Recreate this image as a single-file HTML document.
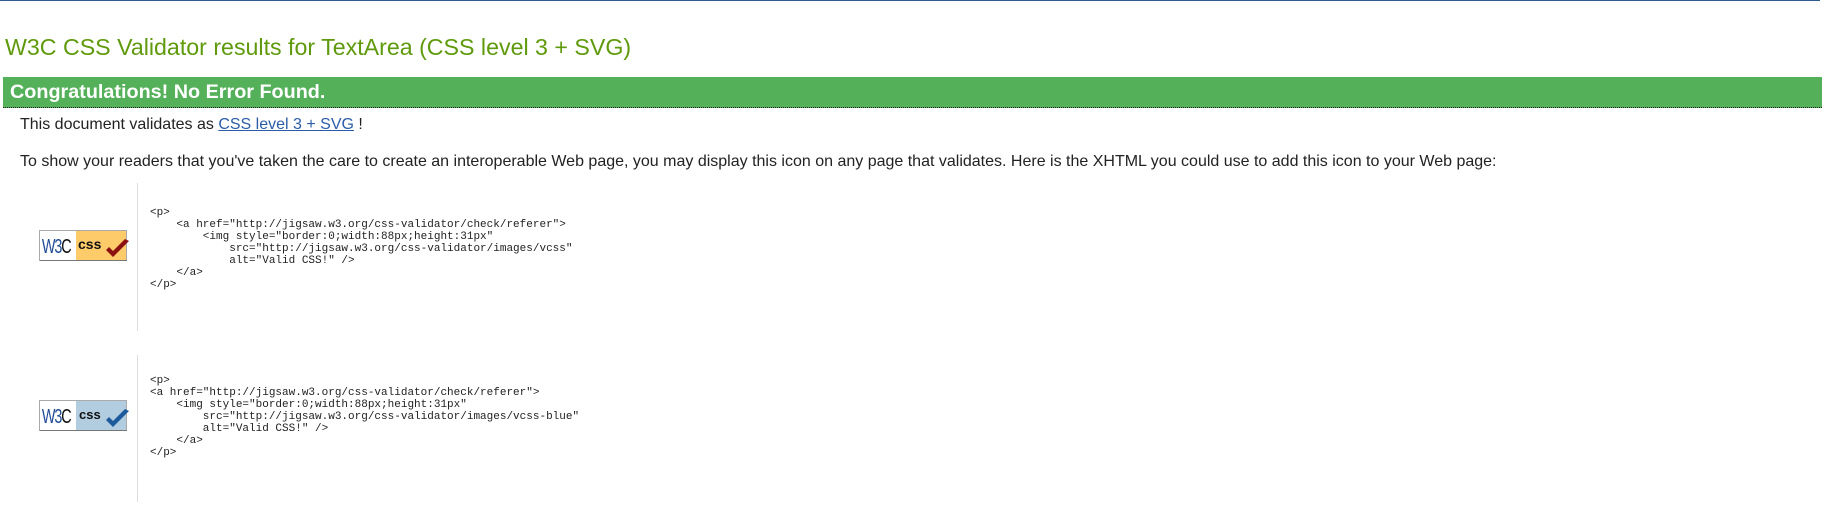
<!DOCTYPE html>
<html><head><meta charset="utf-8"><style>
body{margin:0;width:1826px;height:526px;background:#fff;position:relative;overflow:hidden;font-family:"Liberation Sans",Arial,sans-serif;}
.abs{position:absolute;}
.topline{left:0;top:0;width:1820px;height:1px;background:#2f5b8f;}
h2{position:absolute;left:5px;top:34px;margin:0;font-weight:normal;font-size:23.2px;color:#5f9a0c;white-space:nowrap;}
.bar{left:3px;top:77px;width:1819px;height:30px;background:#55b05a;border-bottom:1px dotted #222;}
.bar span{position:absolute;left:7px;top:4px;color:#fff;font-weight:bold;font-size:19.8px;}
.t{font-size:16px;color:#222;white-space:nowrap;}
a{color:#2a5ca8;}
.sep{width:1px;background:#ddd;left:137px;}
pre{position:absolute;margin:0;font-family:"Liberation Mono","DejaVu Sans Mono",monospace;font-size:11px;line-height:12px;color:#222;left:150px;}
</style></head><body>
<div class="abs topline"></div>
<h2>W3C CSS Validator results for TextArea (CSS level 3 + SVG)</h2>
<div class="abs bar"><span>Congratulations! No Error Found.</span></div>
<div class="abs t" style="left:20px;top:116px;">This document validates as <a href="#">CSS level 3 + SVG</a> !</div>
<div class="abs t" style="left:20px;top:153px;">To show your readers that you've taken the care to create an interoperable Web page, you may display this icon on any page that validates. Here is the XHTML you could use to add this icon to your Web page:</div>

<div class="abs sep" style="top:183px;height:148px;"></div>
<svg class="abs" style="left:39px;top:230px" width="92" height="34" viewBox="0 0 92 34">
<rect x="0.5" y="0.5" width="87" height="30" fill="#fff" stroke="#aaa"/>
<rect x="37" y="1" width="50" height="29" fill="#fdcb6a"/>
<line x1="1" y1="30.5" x2="88" y2="30.5" stroke="#777"/>
<g transform="scale(0.72,1)"><text x="4" y="23" font-family="Liberation Sans,sans-serif" font-size="20" fill="#1e4c95" letter-spacing="-1.5">W3<tspan fill="#111" letter-spacing="0">C</tspan></text></g>
<text x="39" y="19" font-family="Liberation Sans,sans-serif" font-weight="bold" font-size="14" fill="#111">css</text>
<path d="M67 20 L74 27 L90 11 L86 9 L74 21 L70 17 Z" fill="#8b1010"/>
</svg>
<pre style="top:207px;">&lt;p&gt;
    &lt;a href="http://jigsaw.w3.org/css-validator/check/referer"&gt;
        &lt;img style="border:0;width:88px;height:31px"
            src="http://jigsaw.w3.org/css-validator/images/vcss"
            alt="Valid CSS!" /&gt;
    &lt;/a&gt;
&lt;/p&gt;</pre>

<div class="abs sep" style="top:355px;height:147px;"></div>
<svg class="abs" style="left:39px;top:400px" width="92" height="34" viewBox="0 0 92 34">
<rect x="0.5" y="0.5" width="87" height="30" fill="#fff" stroke="#aaa"/>
<rect x="37" y="1" width="50" height="29" fill="#b3cde0"/>
<line x1="1" y1="30.5" x2="88" y2="30.5" stroke="#777"/>
<g transform="scale(0.72,1)"><text x="4" y="23" font-family="Liberation Sans,sans-serif" font-size="20" fill="#1e4c95" letter-spacing="-1.5">W3<tspan fill="#111" letter-spacing="0">C</tspan></text></g>
<text x="40" y="19" font-family="Liberation Sans,sans-serif" font-weight="bold" font-size="13" fill="#111">css</text>
<path d="M67 20 L74 27 L90 11 L86 9 L74 21 L70 17 Z" fill="#1d5a9c"/>
</svg>
<pre style="top:375px;">&lt;p&gt;
&lt;a href="http://jigsaw.w3.org/css-validator/check/referer"&gt;
    &lt;img style="border:0;width:88px;height:31px"
        src="http://jigsaw.w3.org/css-validator/images/vcss-blue"
        alt="Valid CSS!" /&gt;
    &lt;/a&gt;
&lt;/p&gt;</pre>
</body></html>
